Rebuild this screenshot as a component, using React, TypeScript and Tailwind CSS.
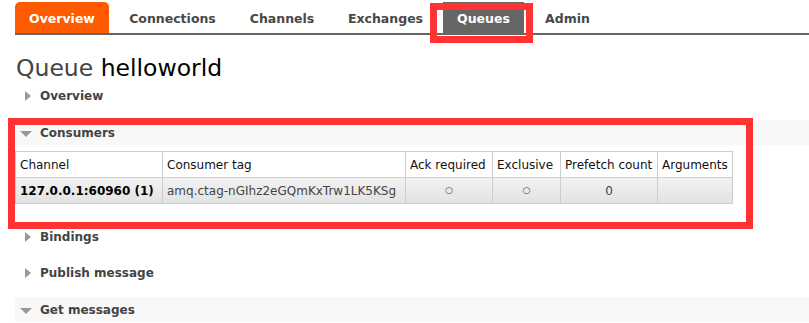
import type { ReactNode } from 'react';

const tabs = [
  { label: 'Overview', w: 'w-[94px]' },
  { label: 'Connections', w: 'w-[113px]' },
  { label: 'Channels', w: 'w-[92px]' },
  { label: 'Exchanges', w: 'w-[101px]' },
  { label: 'Queues', w: 'w-[81px]' },
  { label: 'Admin', w: 'w-[73px]' },
];

const columns = [
  { label: 'Channel', w: 'w-[147px]' },
  { label: 'Consumer tag', w: 'w-[243px]' },
  { label: 'Ack required', w: 'w-[87px]' },
  { label: 'Exclusive', w: 'w-[68px]' },
  { label: 'Prefetch count', w: 'w-[97px]' },
  { label: 'Arguments', w: 'w-[75px]' },
];

function Arrow({ open }: { open: boolean }) {
  return open ? (
    <svg width="12" height="12" viewBox="0 0 12 12" className="shrink-0">
      <polygon points="0,4 12,4 6,10" fill="#999" />
    </svg>
  ) : (
    <svg width="12" height="12" viewBox="0 0 12 12" className="shrink-0">
      <polygon points="5,1 11,6 5,11" fill="#999" />
    </svg>
  );
}

function SectionHeader({ title, open, className = '' }: { title: string; open?: boolean; className?: string }) {
  return (
    <div
      className={`flex items-center h-[25px] gap-[8px] pl-[5px] text-[12px] font-bold text-[#444] ${
        open ? 'bg-[#f8f8f8]' : ''
      } ${className}`}
    >
      <Arrow open={!!open} />
      <span>{title}</span>
    </div>
  );
}

function Cell({ children, className = '' }: { children?: ReactNode; className?: string }) {
  return (
    <td className={`border border-[#ccc] px-[4px] h-[26px] whitespace-nowrap overflow-hidden ${className}`}>
      {children}
    </td>
  );
}

export default function App() {
  return (
    <div className="relative w-[809px] h-[323px] overflow-hidden bg-white font-['DejaVu_Sans',Verdana,sans-serif]">
      {/* nav */}
      <div className="ml-[15px] pt-[2px] flex border-b-2 border-[#666]">
        {tabs.map(t => (
          <div
            key={t.label}
            className={`${t.w} h-[31px] pt-[3px] mr-[7px] flex items-center justify-center text-[12.5px] font-bold ${
              t.label === 'Overview'
                ? 'bg-[#ff5a00] text-white rounded-t-[5px]'
                : t.label === 'Queues'
                ? 'bg-[#666] text-white'
                : 'text-[#484848]'
            }`}
          >
            {t.label}
          </div>
        ))}
      </div>

      <div className="pl-[15px]">
        <h1 className="mt-[18px] pl-px text-[23.5px] leading-[30px] text-[#444]">
          Queue <span className="text-black">helloworld</span>
        </h1>

        <SectionHeader title="Overview" />

        <SectionHeader title="Consumers" open className="mt-[12px]" />
        <table className="mt-[6px] border-collapse text-[12px] table-fixed w-[717px]">
          <thead>
            <tr className="bg-white text-[#111]">
              {columns.map(c => (
                <Cell key={c.label} className={`${c.w} text-left font-normal`}>
                  {c.label}
                </Cell>
              ))}
            </tr>
          </thead>
          <tbody>
            <tr className="bg-gradient-to-b from-[#f2f2f2] to-[#e2e2e2]">
              <Cell className="font-bold text-black">127.0.0.1:60960 (1)</Cell>
              <Cell className="text-[#444]">amq.ctag-nGIhz2eGQmKxTrw1LK5KSg</Cell>
              <Cell className="text-center text-[#444] text-[9px]">○</Cell>
              <Cell className="text-center text-[#444] text-[9px]">○</Cell>
              <Cell className="text-center text-[#444]">0</Cell>
              <Cell />
            </tr>
          </tbody>
        </table>

        <SectionHeader title="Bindings" className="mt-[20px]" />
        <SectionHeader title="Publish message" className="mt-[11px]" />
        <SectionHeader title="Get messages" open className="mt-[12px]" />
      </div>

      {/* annotation boxes */}
      <div className="absolute left-[430px] top-[3px] w-[103px] h-[40px] border-[7px] border-[#ff3333]" />
      <div className="absolute left-[8px] top-[118px] w-[745px] h-[111px] border-[7px] border-[#ff3333]" />
    </div>
  );
}
